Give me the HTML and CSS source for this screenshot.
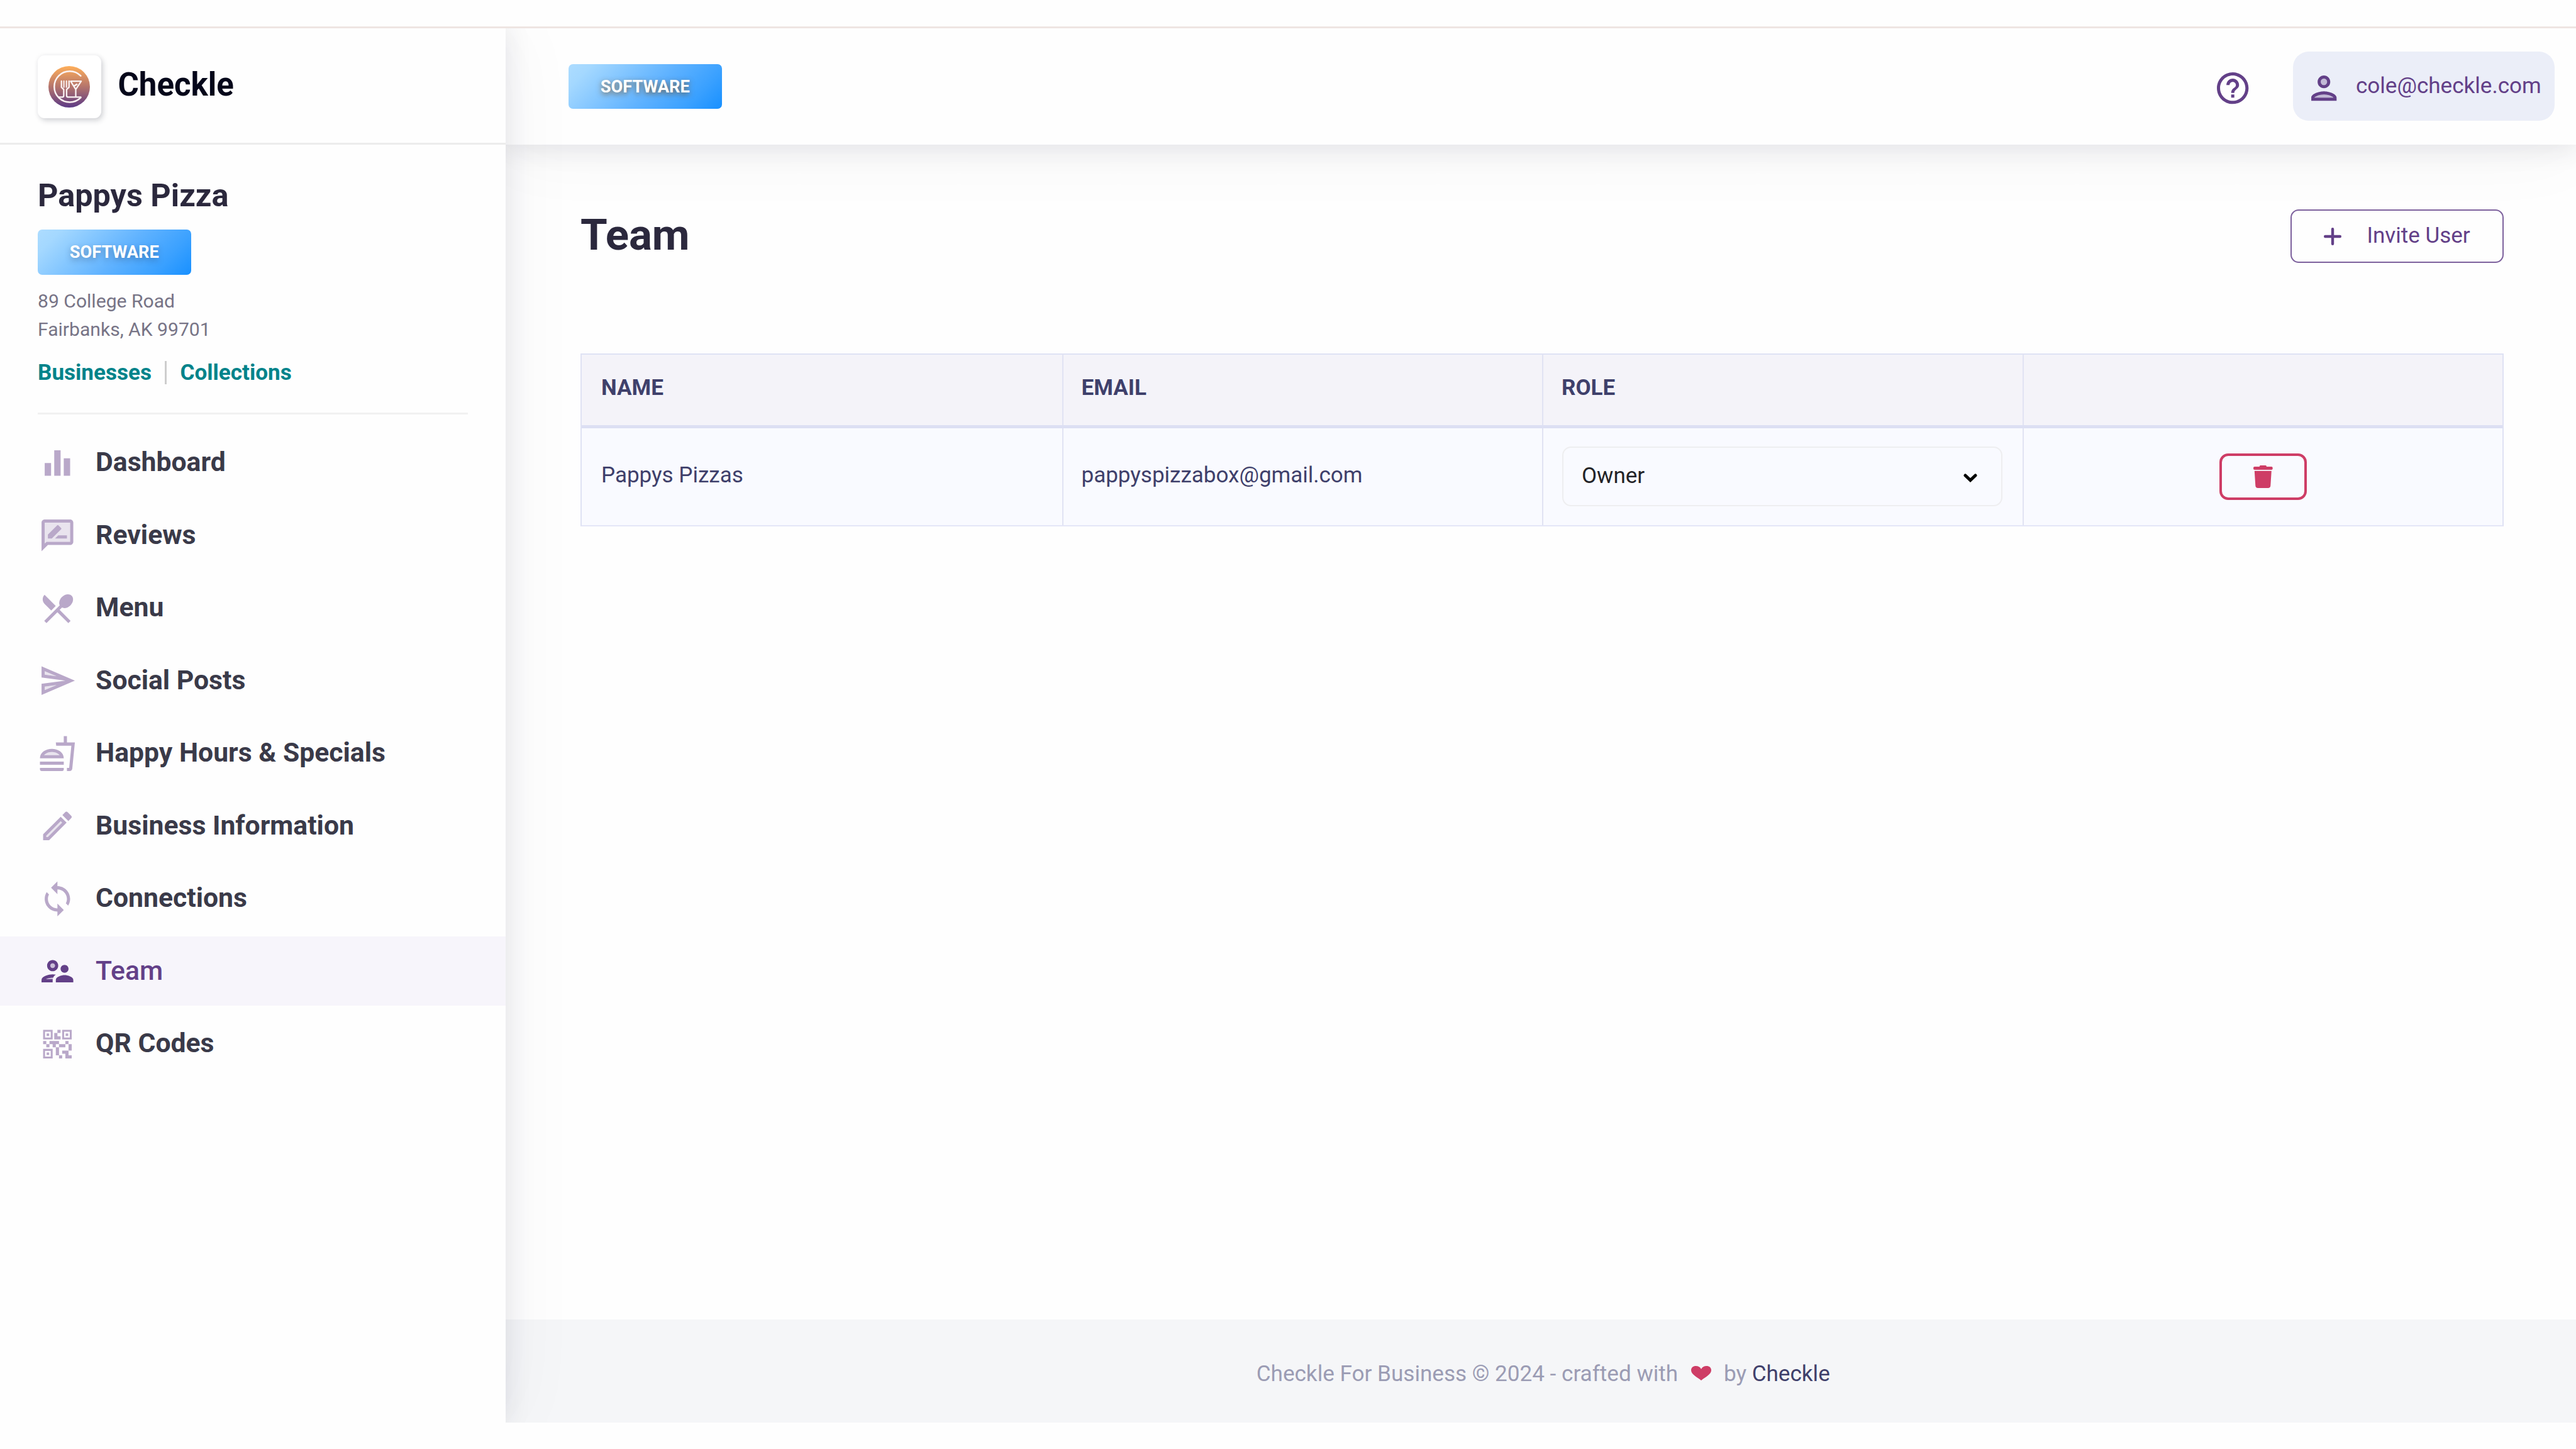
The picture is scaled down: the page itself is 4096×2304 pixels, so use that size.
FILE: index.html
```html
<!DOCTYPE html>
<html lang="en">
<head>
<meta charset="utf-8">
<title>Team - Checkle</title>
<link rel="stylesheet" href="styles.css">
</head>
<body>
<div class="strip"></div>
<div class="app">
  <aside class="sidebar">
    <div class="brand">
      <div class="logo">
        <svg viewBox="132 98 290 290" stroke="#fbf3f3" stroke-width="10" stroke-linecap="round" stroke-linejoin="round">
          <defs><linearGradient id="sunset" x1="0" y1="0" x2="0" y2="1"><stop offset="0" stop-color="#ffaf5a"/><stop offset=".5" stop-color="#b4746c"/><stop offset="1" stop-color="#5c3a86"/></linearGradient></defs>
          <circle cx="277" cy="243" r="145" fill="url(#sunset)" stroke="none"/>
          <path d="M358 167A108 108 0 1 0 358 318" stroke-width="11"/>
          <path d="M206 315H230Q239 315 239 305V262L223 246V203M276 203V246L259 262V305Q259 315 268 315H358"/>
          <path d="M240 203V246M258 203V246" stroke-width="9"/>
          <path d="M287 204H361L323 261ZM323 261V313"/>
          <path d="M314 236L330 226" stroke-width="12"/>
        </svg>
      </div>
      <div class="brand-name">Checkle</div>
    </div>
    <section class="profile">
      <h2>Pappys Pizza</h2>
      <span class="badge">SOFTWARE</span>
      <p class="address">89 College Road<br>Fairbanks, AK 99701</p>
      <div class="links"><a>Businesses</a><i></i><a>Collections</a></div>
    </section>
    <nav class="nav">
      <a class="item"><svg viewBox="0 0 24 24"><path d="M10 20h4V4h-4zM4 20h4v-8H4zM16 9v11h4V9z"/></svg><span>Dashboard</span></a>
      <a class="item"><svg viewBox="0 0 24 24"><path class="tint" d="M4 17.17 5.17 16H20V4H4z"/><path d="M20 2H4c-1.1 0-1.99.9-1.99 2L2 22l4-4h14c1.1 0 2-.9 2-2V4c0-1.1-.9-2-2-2zm0 14H5.17L4 17.17V4h16v12zm-9.5-2H18v-2h-5.5zm3.86-5.87c.2-.2.2-.51 0-.71l-1.77-1.77c-.2-.2-.51-.2-.71 0L6 11.53V14h2.47l5.89-5.87z"/></svg><span>Reviews</span></a>
      <a class="item"><svg viewBox="0 0 24 24"><path d="M8.1 13.34l2.83-2.83L3.91 3.5c-1.56 1.56-1.56 4.09 0 5.66l4.19 4.18zm6.78-1.81c1.53.71 3.68.21 5.27-1.38 1.91-1.91 2.28-4.65.81-6.12-1.46-1.46-4.2-1.1-6.12.81-1.59 1.59-2.09 3.74-1.38 5.27L3.7 19.87l1.41 1.41L12 14.41l6.88 6.88 1.41-1.41L13.41 13l1.47-1.47z"/></svg><span>Menu</span></a>
      <a class="item"><svg viewBox="0 0 24 24"><path class="tint" d="M4 8.25l7.51 1L4 6.03zM4.01 17.97l7.5-3.22-7.51 1z"/><path d="M2.01 3L2 10l15 2-15 2 .01 7L23 12 2.01 3zM4 8.25V6.03l7.51 3.22-7.51-1zm.01 9.72v-2.22l7.51-1-7.51 3.22z"/></svg><span>Social Posts</span></a>
      <a class="item"><svg viewBox="0 0 24 24"><path class="tint" d="M8.5 10.99c-1.42 0-3.77.46-4.88 2.01h9.77c-1.12-1.55-3.48-2.01-4.89-2.01z"/><path d="M1 21.98c0 .56.45 1.01 1.01 1.01H15c.56 0 1.01-.45 1.01-1.01V21H1v.98zM8.5 8.99C4.75 8.99 1 11 1 15h15c0-4.01-3.75-6.01-7.5-6.01zM3.62 13c1.11-1.55 3.47-2.01 4.88-2.01s3.77.46 4.88 2.01H3.62zM1 17h15v2H1zM18 5V1h-2v4h-5l.23 2h9.56l-1.4 14H18v2h1.72c.84 0 1.53-.65 1.63-1.47L23 5h-5z"/></svg><span>Happy Hours &amp; Specials</span></a>
      <a class="item"><svg viewBox="0 0 24 24"><path class="tint" d="M5 18.08V19h.92l9.06-9.06-.92-.92z"/><path d="M20.71 7.04c.39-.39.39-1.02 0-1.41l-2.34-2.34c-.2-.2-.45-.29-.71-.29s-.51.1-.7.29l-1.83 1.83 3.75 3.75 1.83-1.83zM3 17.25V21h3.75L17.81 9.94l-3.75-3.75L3 17.25zM5.92 19H5v-.92l9.06-9.06.92.92L5.92 19z"/></svg><span>Business Information</span></a>
      <a class="item"><svg viewBox="0 0 24 24"><path d="M12 4V1L8 5l4 4V6c3.31 0 6 2.69 6 6 0 1.01-.25 1.97-.7 2.8l1.46 1.46C19.54 15.03 20 13.57 20 12c0-4.42-3.58-8-8-8zm0 14c-3.31 0-6-2.69-6-6 0-1.01.25-1.97.7-2.8L5.24 7.74C4.46 8.97 4 10.43 4 12c0 4.42 3.58 8 8 8v3l4-4-4-4v3z"/></svg><span>Connections</span></a>
      <a class="item active"><svg viewBox="0 0 24 24"><circle class="tint" cx="9" cy="8.5" r="1.5"/><path class="tint" d="M9 16c-1.53 0-3.24.5-4.23 1h4.28c.06-.3.16-.6.29-.99z"/><path d="M9 12c1.93 0 3.5-1.57 3.5-3.5S10.93 5 9 5 5.5 6.57 5.5 8.5 7.07 12 9 12zm0-5c.83 0 1.5.67 1.5 1.5S9.83 10 9 10s-1.5-.67-1.5-1.5S8.17 7 9 7zm.05 10H4.77c.99-.5 2.7-1 4.23-1 .11 0 .23.01.34.01.34-.73.93-1.33 1.64-1.81-.73-.13-1.42-.2-1.98-.2-2.34 0-7 1.17-7 3.5V19h7v-1.5c0-.17.02-.34.05-.5zm7.45-2.5c-1.84 0-5.5 1.01-5.5 3V19h11v-1.5c0-1.99-3.66-3-5.5-3zm1.21-1.82c.76-.43 1.29-1.24 1.29-2.18C19 9.12 17.88 8 16.5 8S14 9.12 14 10.5c0 .94.53 1.75 1.29 2.18.36.2.77.32 1.21.32s.85-.12 1.21-.32z"/></svg><span>Team</span></a>
      <a class="item"><svg viewBox="0 0 24 24"><g transform="translate(3 3)"><path fill-rule="evenodd" d="M0 0h6v6H0zM1.2 1.2v3.6h3.6V1.2zM2.2 2.2h1.6v1.6H2.2zM12 0h6v6h-6zM13.2 1.2v3.6h3.6V1.2zM14.2 2.2h1.6v1.6h-1.6zM0 12h6v6H0zM1.2 13.2v3.6h3.6v-3.6zM2.2 14.2h1.6v1.6H2.2z"/><path d="M9 0h2v2H9zM7 2h2v2h2v2H7zM0 7h2v2H0zM2 9h2v2H2zM4 7h6v2H8v2H6V9H4zM14 7h2v2h-2zM10 9h4v2h-4zM16 9h2v4h-2zM8 11h2v5H8zM10 16h2v2h-2zM12 13h4v3h2v2h-4v-3h-2z"/></g></svg><span>QR Codes</span></a>
    </nav>
  </aside>
  <main class="main">
    <header class="topbar">
      <span class="badge warm">SOFTWARE</span>
      <div class="account">
        <svg class="help" viewBox="0 0 24 24"><path d="M11 18h2v-2h-2v2zm1-16C6.48 2 2 6.48 2 12s4.48 10 10 10 10-4.48 10-10S17.52 2 12 2zm0 18c-4.41 0-8-3.59-8-8s3.59-8 8-8 8 3.59 8 8-3.59 8-8 8zm0-14c-2.21 0-4 1.79-4 4h2c0-1.1.9-2 2-2s2 .9 2 2c0 2-3 1.75-3 5h2c0-2.25 3-2.5 3-5 0-2.21-1.79-4-4-4z"/></svg>
        <div class="user">
          <svg viewBox="0 0 24 24"><path class="tint" d="M12 16c-2.69 0-5.77 1.28-6 2h12c-.2-.71-3.3-2-6-2z"/><circle class="tint" cx="12" cy="8" r="2"/><path d="M12 14c-2.67 0-8 1.34-8 4v2h16v-2c0-2.66-5.33-4-8-4zm-6 4c.22-.72 3.31-2 6-2 2.7 0 5.8 1.29 6 2H6zm6-6c2.21 0 4-1.79 4-4s-1.79-4-4-4-4 1.79-4 4 1.79 4 4 4zm0-6c1.1 0 2 .9 2 2s-.9 2-2 2-2-.9-2-2 .9-2 2-2z"/></svg>
          <span>cole@checkle.com</span>
        </div>
      </div>
    </header>
    <div class="content">
      <div class="page-head">
        <h1>Team</h1>
        <button class="invite"><svg viewBox="0 0 28 28"><path d="M14 2.2V25.8M2.2 14H25.8"/></svg><span>Invite User</span></button>
      </div>
      <div class="table">
        <div class="row head"><div>NAME</div><div>EMAIL</div><div>ROLE</div><div></div></div>
        <div class="row data">
          <div><span>Pappys Pizzas</span></div>
          <div><span>pappyspizzabox@gmail.com</span></div>
          <div class="role"><div class="select"><span>Owner</span><svg viewBox="0 0 22 14"><path d="M3 3 11 10.5 19 3"/></svg></div></div>
          <div class="actions"><button class="delete"><svg viewBox="0 0 30.7 36"><path d="M9.8 2V1.5Q9.8 0 11.3 0H19.4Q20.9 0 20.9 1.5V2H28.7Q30.7 2 30.7 4V5Q30.7 7 28.7 7H2Q0 7 0 5V4Q0 2 2 2ZM1.8 8.7H28.8L27.3 32.2Q27 36 23.3 36H7.3Q3.6 36 3.3 32.2Z"/></svg></button></div>
        </div>
      </div>
    </div>
    <footer class="footer">
      <span>Checkle For Business © 2024 - crafted with</span>
      <svg viewBox="0 0 32 23"><path d="M16 23C10 18 0 13.500 0 6.800 0 2.700 3.200 0 7.500 0 11.200 0 14.500 1.800 16 5 17.500 1.800 20.800 0 24.500 0 28.800 0 32 2.700 32 6.800 32 13.500 22 18 16 23Z"/></svg>
      <span>by</span><b>Checkle</b>
    </footer>
  </main>
</div>
</body>
</html>
```
FILE: styles.css
```css
* { box-sizing: border-box; margin: 0; padding: 0; }
body {
  width: 4096px; height: 2304px; overflow: hidden;
  background: #fefefe; color: #3f406b;
  font-family: Roboto, "Liberation Sans", sans-serif; font-size: 35px;
}
svg { display: block; flex: none; fill: currentColor; }
.tint { opacity: .3; }
button { font: inherit; color: inherit; background: none; }

.strip { height: 44.6px; border-bottom: 3px solid #eee5e2; }
.app { display: flex; height: 2217.4px; overflow: hidden; }

.sidebar {
  position: relative; z-index: 2; flex: none; width: 804px; background: #fefefe;
  box-shadow: 0 0 40px rgba(36, 36, 60, .11), 6px 0 120px rgba(36, 36, 60, .045);
}
.brand {
  display: flex; align-items: center; gap: 27px; height: 185.4px;
  padding: 4px 0 0 60px; border-bottom: 3px solid #ececec;
}
.logo {
  display: flex; align-items: center; justify-content: center;
  width: 100.5px; height: 100.5px; border-radius: 11px; background: #fff;
  box-shadow: 3px 4px 9px rgba(40, 44, 60, .18), 0 0 8px rgba(40, 44, 60, .05);
}
.logo svg { width: 66px; height: 66px; fill: none; }
.brand-name { margin-top: -6px; font-size: 51px; line-height: 60px; font-weight: 700; color: #05071a; }

.profile { margin: 0 60px; height: 429px; padding-top: 50.8px; border-bottom: 3px solid #f1f1f1; }
.profile h2 { font-size: 50.4px; line-height: 60px; font-weight: 700; color: #2b283d; }
.badge {
  display: flex; align-items: center; justify-content: center;
  width: 243.6px; height: 71.4px; border-radius: 7px;
  background: linear-gradient(135deg, #addcff 0%, #a4d8ff 12%, #5fb2ff 55%, #3ba1ff 80%, #1890ff 100%);
  color: #fff; font-size: 27.2px; font-weight: 700;
  text-shadow: 0 4px 10px rgba(40, 60, 90, .4);
}
.profile .badge { margin: 24.5px 0 18.9px; }
.topbar .badge { padding-top: 1px; }
.warm { text-shadow: 0 3px 8px rgba(120, 70, 10, .7); }
.address { font-size: 30.1px; line-height: 45.6px; color: #777486; }
.links {
  display: flex; gap: 21.5px; margin-top: 27px; height: 37.5px; line-height: 36px;
  font-size: 35.1px; font-weight: 700; color: #00838a;
}
.links i { width: 2.6px; background: #cdcdcd; }

.nav { display: flex; flex-direction: column; gap: 5.5px; padding-top: 22px; }
.item {
  display: flex; align-items: center; gap: 30.5px; height: 110px; padding-left: 61px;
  font-size: 42.7px; font-weight: 700; color: #3a3a49;
}
.item svg { width: 60.6px; height: 60.6px; color: #b9a8c9; }
.item span { padding-bottom: 3px; }
.active { background: #f7f5fb; color: #634088; font-weight: 500; }
.active svg { color: #634088; }

.main { flex: 1; display: flex; flex-direction: column; }
.topbar {
  position: relative; z-index: 1; flex: none; height: 185.4px;
  display: flex; justify-content: space-between; align-items: center;
  padding: 0 35px 0 100px; background: #fefefe;
  box-shadow: 0 5px 40px rgba(36, 36, 60, .11), 0 14px 120px rgba(36, 36, 60, .04);
}
.account { display: flex; align-items: center; gap: 65px; color: #634088; }
.help { width: 60.4px; height: 60.4px; margin-top: 6px; }
.user {
  display: flex; align-items: center; gap: 21px; width: 416px; height: 110px;
  padding-left: 19px; border-radius: 25px; background: #ebeef8;
}
.user svg { width: 60.4px; height: 60.4px; margin-top: 6px; }
.user span { padding-bottom: 2px; font-size: 35.1px; }

.content { flex: 1; padding: 103.5px 115.5px 0 119px; }
.page-head { display: flex; justify-content: space-between; height: 228.5px; }
h1 { margin-top: 1px; font-size: 69px; line-height: 79px; font-weight: 700; color: #2b283d; }
.invite {
  display: flex; align-items: center; gap: 41px; width: 339px; height: 85px;
  padding-left: 50.5px; border: 2px solid #7d619d; border-radius: 13px; color: #634088;
}
.invite svg { width: 28px; height: 28px; fill: none; stroke: currentColor; stroke-width: 4.4px; stroke-linecap: round; }
.invite span { padding-bottom: 2px; }

.table { width: 3058px; border: 2px solid #dfe2f4; border-bottom-color: #e4e6f7; }
.row { display: grid; grid-template-columns: repeat(4, 1fr); }
.row > div { padding-left: 29px; border-left: 2px solid #e1e3f3; }
.row > div:first-child { padding-left: 31px; border-left: 0; }
.head { height: 117px; border-bottom: 5px solid #dcdff3; background: #f4f3f9; line-height: 106px; font-weight: 700; }
.data { height: 154.5px; background: #f9faff; line-height: 149px; }
.row > .role { padding: 29.5px 32px 0 30px; }
.select {
  display: flex; align-items: center; justify-content: space-between; height: 94.5px;
  padding: 0 38px 0 29px; border: 2px solid #eeeef0; border-radius: 14px; line-height: 40px; color: #232327;
}
.select span { padding-bottom: 2px; }
.select svg { width: 22px; height: 14px; margin-top: 4px; fill: none; stroke: #000; stroke-width: 5px; stroke-linecap: round; }
.row > .actions { display: flex; align-items: center; justify-content: center; padding: 0; }
.delete {
  display: flex; align-items: center; justify-content: center; width: 139px; height: 74px;
  border: 4px solid #ce3d66; border-radius: 14px; color: #ce3d66;
}
.delete svg { width: 30.7px; height: 36px; }

.footer {
  flex: none; height: 164px; display: flex; justify-content: center; align-items: center;
  padding: 8px 0 0 7px; background: #f5f6f8; color: #9b9cb4; font-size: 35.1px;
}
.footer svg { width: 32px; height: 23px; margin: 0 20px 0 21px; color: #ce3d66; }
.footer b { margin-left: 8.5px; font-weight: 400; color: #3f406b; }
```
